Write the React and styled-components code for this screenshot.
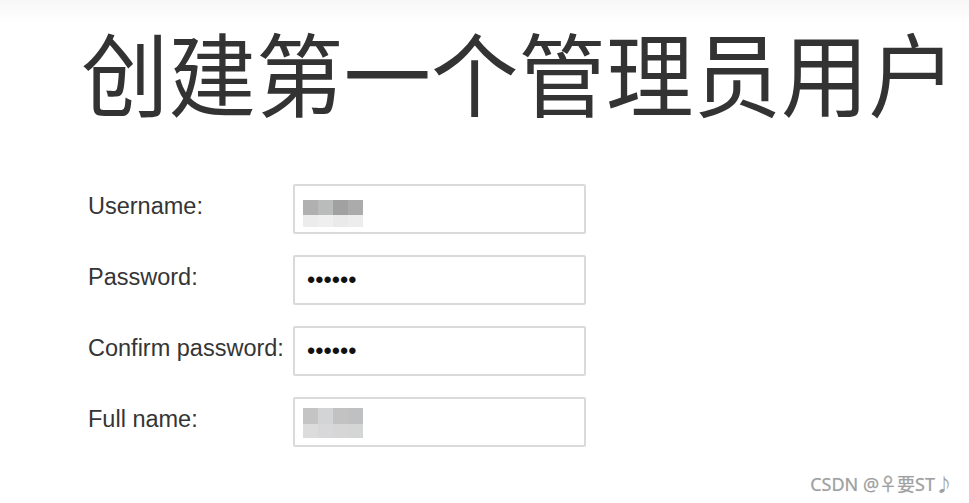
import React from 'react'
import styled, { createGlobalStyle } from 'styled-components'

const GlobalStyle = createGlobalStyle`
  html, body {
    margin: 0;
    padding: 0;
    background: #fff;
  }
  body {
    font-family: "Liberation Sans", Arial, "Noto Sans CJK SC", sans-serif;
    color: #333;
  }
`

const Page = styled.main`
  position: relative;
  width: 969px;
  height: 503px;
  overflow: hidden;
  background: linear-gradient(#f7f7f7 0, #fff 24px);
  padding: 23px 0 0 81px;
  box-sizing: border-box;
`

const Title = styled.h1`
  margin: 0;
  font-family: "Noto Sans CJK SC", "Noto Sans", sans-serif;
  font-weight: 400;
  font-size: 87.5px;
  line-height: 94px;
  color: #333;
  white-space: nowrap;
  transform: scaleY(1.04);
  transform-origin: 0 40%;
`

const Form = styled.form`
  display: grid;
  grid-template-columns: 205px 293px;
  row-gap: 21px;
  margin: 67px 0 0 7px;
`

const Label = styled.label`
  display: flex;
  align-items: center;
  padding-bottom: 5px;
  font-size: 23.5px;
  color: #353535;
  white-space: nowrap;
`

const Field = styled.div`
  position: relative;
  height: 50px;
`

const Input = styled.input`
  width: 100%;
  height: 100%;
  box-sizing: border-box;
  border: 2px solid #dadada;
  border-radius: 2px;
  padding: 0 12px;
  background: #fff;
  font-family: "Liberation Sans", Arial, sans-serif;
  font-size: 23.5px;
  color: #111;
  outline: none;
`

const Mosaic = styled.div`
  position: absolute;
  left: 10px;
  top: ${p => p.$top}px;
  display: grid;
  grid-template-columns: repeat(4, 15px);
  grid-template-rows: ${p => p.$rows};
  pointer-events: none;
`

const Cell = styled.span`
  background: ${p => p.$c};
`

const Watermark = styled.div`
  position: absolute;
  right: 16px;
  bottom: 7px;
  font-family: "Noto Sans", "Noto Sans CJK SC", sans-serif;
  font-size: 18px;
  color: #a0a0a0;
  text-shadow: 0 0 1px #d0d0d0;
`

const mosaics = {
  username: {
    top: 16,
    rows: '15px 12px',
    cells: ['#b0b0b0', '#babcbb', '#a1a1a1', '#ababab', '#ececec', '#efefef', '#eaeaea', '#ededed'],
  },
  fullname: {
    top: 11,
    rows: '16px 14px',
    cells: ['#c4c4c4', '#d3d4d6', '#c2c2c2', '#bfc0c2', '#dcdcdc', '#d8d8da', '#d6d6d6', '#d4d5d5'],
  },
}

const fields = [
  { id: 'username', label: 'Username:', type: 'text', value: '', mosaic: 'username' },
  { id: 'password', label: 'Password:', type: 'password', value: '123456' },
  { id: 'confirm', label: 'Confirm password:', type: 'password', value: '123456' },
  { id: 'fullname', label: 'Full name:', type: 'text', value: '', mosaic: 'fullname' },
]

export default function App() {
  return (
    <>
      <GlobalStyle />
      <Page>
        <Title>创建第一个管理员用户</Title>
        <Form onSubmit={e => e.preventDefault()}>
          {fields.map(f => {
            const m = f.mosaic && mosaics[f.mosaic]
            return (
              <React.Fragment key={f.id}>
                <Label htmlFor={f.id}>{f.label}</Label>
                <Field>
                  <Input id={f.id} type={f.type} defaultValue={f.value} />
                  {m && (
                    <Mosaic $top={m.top} $rows={m.rows}>
                      {m.cells.map((c, i) => (
                        <Cell key={i} $c={c} />
                      ))}
                    </Mosaic>
                  )}
                </Field>
              </React.Fragment>
            )
          })}
        </Form>
        <Watermark>CSDN @♀要ST♪</Watermark>
      </Page>
    </>
  )
}
